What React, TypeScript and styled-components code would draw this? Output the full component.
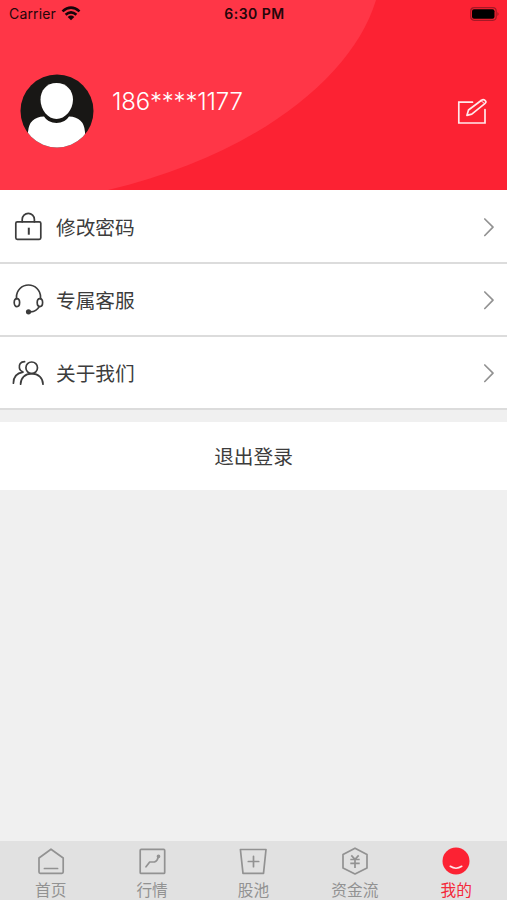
import React from 'react';
import styled, { createGlobalStyle } from 'styled-components';

const GlobalStyle = createGlobalStyle`
  * { box-sizing: border-box; }
  body { margin: 0; background: #f0f0f0; }
  button { font: inherit; border: 0; padding: 0; background: none; color: inherit; }
`;

const Screen = styled.div`
  display: flex;
  flex-direction: column;
  width: 100%;
  height: 100vh;
  background: #f0f0f0;
  color: #3c3c3c;
  font-family: Inter, 'Noto Sans CJK SC', sans-serif;
`;

const Header = styled.header`
  position: relative;
  height: 190px;
  flex: none;
  background: #fc2233;
`;

const HeaderArc = styled.svg`
  position: absolute;
  inset: 0;
`;

const StatusBar = styled.div`
  position: relative;
  display: grid;
  grid-template-columns: 1fr auto 1fr;
  align-items: center;
  height: 27px;
  padding: 0 7px 0 9px;
  color: #24060a;
  font-size: 14px;
`;

const Carrier = styled.div`
  display: flex;
  align-items: center;
  gap: 5px;
  letter-spacing: 0.15px;
`;

const Clock = styled.div`
  font-weight: 600;
  font-size: 14px;
  letter-spacing: 0.5px;
`;

const Battery = styled.svg`
  justify-self: end;
`;

const Profile = styled.div`
  position: relative;
  display: flex;
  align-items: flex-start;
  padding: 47px 19px 0 20px;
`;

const Phone = styled.div`
  flex: 1;
  margin: 13px 0 0 18px;
  color: #fff;
  font-size: 24px;
  font-weight: 300;
  line-height: 30px;
  letter-spacing: -0.2px;
`;

const EditButton = styled.button`
  margin-top: 23px;
  height: 30px;
`;

const Menu = styled.nav`
  display: flex;
  flex-direction: column;
  flex: none;
`;

const MenuRow = styled.button`
  display: flex;
  align-items: center;
  height: 73.2px;
  padding: 1px 12px 0 12px;
  background: #fff;
  border-bottom: 2px solid #dcdcdc;
  text-align: left;

  &:first-child {
    height: 74px;
    padding-top: 2px;
  }
`;

const MenuLabel = styled.span`
  flex: 1;
  margin: 2px 0 0 12px;
  font-size: 19.7px;
  line-height: 30px;
`;

const LogoutButton = styled.button`
  flex: none;
  height: 68px;
  margin-top: 11.6px;
  padding-bottom: 0.5px;
  background: #fff;
  font-size: 19.7px;
`;

const TabBar = styled.nav`
  display: grid;
  grid-template-columns: repeat(5, 1fr);
  flex: none;
  height: 59px;
  margin-top: auto;
  background: #e1e1e1;
`;

const Tab = styled.button<{ $active?: boolean }>`
  display: flex;
  flex-direction: column;
  align-items: center;
  padding-top: 5px;
  color: ${(p) => (p.$active ? '#f4283a' : '#929292')};
`;

const TabLabel = styled.span`
  margin-top: 4px;
  font-size: 15.7px;
  line-height: 22px;
`;

const LineIcon = styled.svg`
  display: block;
  flex: none;
  fill: none;
  stroke: currentColor;
  stroke-width: 1.7;
  stroke-linecap: round;
  stroke-linejoin: round;
`;

const Chevron = styled(LineIcon)`
  color: #929292;
`;

const WifiIcon = () => (
  <svg width="20" height="15" viewBox="0 0 20 15" fill="none" stroke="#17050a" strokeWidth="2.6">
    <path d="M1.500 5.400Q10-2.200 18.500 5.400M4.600 8.800Q10 4 15.400 8.800" />
    <path d="M10 14.200 6.700 10.900Q10 8 13.300 10.900Z" fill="#17050a" stroke="none" />
  </svg>
);

const Avatar = () => (
  <svg width="74" height="74" viewBox="0 0 74 74">
    <defs>
      <clipPath id="avatar-clip"><circle cx="37" cy="37" r="36.5" /></clipPath>
    </defs>
    <circle cx="37" cy="37" r="36.5" fill="#181715" />
    <g clipPath="url(#avatar-clip)" fill="#fff">
      <path d="M8 74V58Q9 43 24 42.500Q28 49 36.500 49Q45 49 49 42.500Q64 43 65 58V74Z" />
      <path d="M36.500 9C46.500 9 53 16.500 53 25.500C53 36 45 45 36.500 45C28 45 20.500 36 20.500 25.500C20.500 16.500 26.500 9 36.500 9Z" />
    </g>
  </svg>
);

const LockIcon = () => (
  <LineIcon width="32" height="32" viewBox="0 0 32 32">
    <rect x="3.800" y="10.800" width="25" height="17.500" rx="1.500" />
    <path d="M10.200 10.800V8.500a6.100 6.100 0 0 1 12.200 0v2.300" />
    <path d="M16.800 16.700v7" strokeLinecap="butt" strokeWidth="2" />
  </LineIcon>
);

const HeadsetIcon = () => (
  <LineIcon width="32" height="32" viewBox="0 0 32 32">
    <path d="M4.500 14.700V13a12 12 0 0 1 24 0v1.700" />
    <ellipse cx="4.900" cy="18.600" rx="2.700" ry="4" />
    <ellipse cx="27.900" cy="18.600" rx="2.700" ry="4" />
    <path d="M27.200 22.600Q24.500 27.400 18.500 27.900" />
    <circle cx="16.500" cy="27.800" r="2.600" fill="currentColor" stroke="none" />
  </LineIcon>
);

const PeopleIcon = () => (
  <LineIcon width="32" height="32" viewBox="0 0 32 32">
    <circle cx="19.700" cy="10.800" r="5.800" />
    <path d="M8.600 27.200C8.600 21 13 16.600 19.700 16.600S31 21 31 27.200" />
    <path d="M12.600 4.700C8.500 4.700 6.800 7.700 7.400 11Q7.800 13.700 11 15.100C5 16 1.400 20 1.400 26.200" />
  </LineIcon>
);

const EditIcon = () => (
  <LineIcon width="31" height="30" viewBox="0 0 31 30" color="#ffe9eb">
    <path d="M15.500 5.200H1.800V26H28V12.500" strokeLinejoin="miter" />
    <path d="M9.900 18.400 11.500 13 24.500 3.200Q27 1.800 28.900 4.500Q29.300 5.500 27.800 6.700L14.800 17.200Z" />
    <path d="M24 3.600 27.600 6.800" strokeWidth="1" />
  </LineIcon>
);

const ArrowIcon = () => (
  <Chevron width="12" height="20" viewBox="0 0 12 20">
    <path d="M1.800 2 10 10.200 1.800 18.500" />
  </Chevron>
);

const HomeIcon = () => (
  <LineIcon width="30" height="30" viewBox="0 0 30 30">
    <path d="M3 12 15 3.200 27.200 12V26Q27.200 27.300 25.900 27.300H4.300Q3 27.300 3 26Z" />
    <path d="M8.400 22.500H21.600" />
  </LineIcon>
);

const MarketIcon = () => (
  <LineIcon width="30" height="30" viewBox="0 0 30 30">
    <rect x="3.200" y="3.400" width="24.500" height="24" rx="1" />
    <path d="M9 20.800 12.700 16H17.500Q20.500 14.800 21.300 10.800" />
    <circle cx="21.500" cy="10.300" r="1" fill="currentColor" />
  </LineIcon>
);

const PoolIcon = () => (
  <LineIcon width="30" height="30" viewBox="0 0 30 30">
    <path d="M2.400 3.500H28L25.500 27.300H5Z" />
    <path d="M10.300 15.500H20.700M15.500 10.300V20.700" />
  </LineIcon>
);

const FundsIcon = () => (
  <LineIcon width="30" height="30" viewBox="0 0 30 30">
    <path d="M15 2.200 27 8.500V22L15 28 3 22V8.500Z" />
    <path d="m11.300 9.300 3.700 4 3.700-4M10.300 13.500h9.400M10.300 17.300h9.400M15 13.300v8.700" strokeLinecap="butt" />
  </LineIcon>
);

const MineIcon = () => (
  <LineIcon width="30" height="30" viewBox="0 0 30 30">
    <circle cx="15" cy="15" r="13.500" fill="#fc2233" stroke="none" />
    <path d="M9.300 20.300Q15 24.200 20.700 20.300" stroke="#ffe5e7" />
  </LineIcon>
);

const menuItems = [
  { label: '修改密码', Icon: LockIcon },
  { label: '专属客服', Icon: HeadsetIcon },
  { label: '关于我们', Icon: PeopleIcon },
];

const tabs = [
  { label: '首页', Icon: HomeIcon },
  { label: '行情', Icon: MarketIcon },
  { label: '股池', Icon: PoolIcon },
  { label: '资金流', Icon: FundsIcon },
  { label: '我的', Icon: MineIcon, active: true },
];

export default function App() {
  return (
    <Screen>
      <GlobalStyle />
      <Header>
        <HeaderArc width="507" height="190" viewBox="0 0 507 190">
          <path d="M0 0H376C352 80 250 157 108 190H0Z" fill="#ff3647" />
        </HeaderArc>
        <StatusBar>
          <Carrier>Carrier <WifiIcon /></Carrier>
          <Clock>6:30 PM</Clock>
          <Battery width="30" height="14" viewBox="0 0 30 14">
            <rect x="0.700" y="0.700" width="25.500" height="12.600" rx="3.500" fill="none" stroke="#a51926" strokeWidth="1.200" />
            <rect x="2" y="2.200" width="22.500" height="9.600" rx="2" fill="#000" />
            <path d="M27.500 5v4q2-2 0-4Z" fill="#8b1822" />
          </Battery>
        </StatusBar>
        <Profile>
          <Avatar />
          <Phone>186****1177</Phone>
          <EditButton aria-label="编辑"><EditIcon /></EditButton>
        </Profile>
      </Header>
      <Menu>
        {menuItems.map(({ label, Icon }) => (
          <MenuRow key={label}>
            <Icon />
            <MenuLabel>{label}</MenuLabel>
            <ArrowIcon />
          </MenuRow>
        ))}
      </Menu>
      <LogoutButton>退出登录</LogoutButton>
      <TabBar>
        {tabs.map(({ label, Icon, active }) => (
          <Tab key={label} $active={active}>
            <Icon />
            <TabLabel>{label}</TabLabel>
          </Tab>
        ))}
      </TabBar>
    </Screen>
  );
}
